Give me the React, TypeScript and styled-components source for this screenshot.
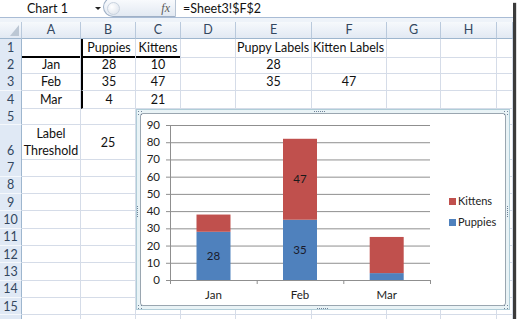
import React from "react";
import styled, { createGlobalStyle } from "styled-components";

const Global = createGlobalStyle`
  html, body { margin: 0; padding: 0; background: #fff; }
  body { font-family: Lato, "Open Sans", sans-serif; }
`;

const COLS = [22, 59, 55, 45, 55, 76, 75, 54, 56, 16];
const TEMPLATE = COLS.map((c) => `${c}px`).join(" ");
const LETTERS = ["A", "B", "C", "D", "E", "F", "G", "H", ""];

const Window = styled.div`
  position: relative;
  width: 513px;
  height: 319px;
  overflow: hidden;
  background: #fff;
  box-shadow: 3px 3px 1px rgba(25, 25, 25, 0.85);
`;

const FormulaBar = styled.div`
  display: flex;
  align-items: stretch;
  height: 17px;
  border-bottom: 1px solid #a9bcd5;
  background: #fff;
`;

const NameBox = styled.div`
  width: 92px;
  box-sizing: border-box;
  padding-left: 27px;
  display: flex;
  align-items: center;
  font-size: 12.5px;
  color: #111;
`;

const ArrowBox = styled.div`
  width: 11px;
  display: flex;
  align-items: center;
  justify-content: center;
`;

const Arrow = styled.span`
  width: 0;
  height: 0;
  border-left: 3px solid transparent;
  border-right: 3px solid transparent;
  border-top: 3px solid #222;
`;

const FxPill = styled.div`
  width: 73px;
  margin-top: -3px;
  height: 20px;
  box-sizing: border-box;
  border: 1px solid #9fb0c6;
  border-right-color: #b7c4d4;
  border-radius: 11px 0 0 11px;
  background: linear-gradient(#fbfcfe, #e2e9f2);
  display: flex;
  align-items: center;
  justify-content: space-between;
  padding: 3px 5px 0 3px;
`;

const Shine = styled.span`
  width: 11px;
  height: 11px;
  border-radius: 50%;
  background: radial-gradient(circle at 35% 35%, #ffffff, #d9e0ea);
  border: 1px solid #c9d3df;
`;

const Fx = styled.span`
  font-family: "Liberation Serif", serif;
  font-style: italic;
  font-size: 12px;
  color: #5a5a5a;
`;

const FormulaText = styled.div`
  flex: 1;
  display: flex;
  align-items: center;
  padding-left: 7px;
  font-size: 12.5px;
  color: #111;
`;

const Spacer = styled.div`
  height: 3.5px;
  background: #eef3f9;
`;

const HeaderRow = styled.div`
  display: grid;
  grid-template-columns: ${TEMPLATE};
  height: 17.2px;
`;

const ColHead = styled.div`
  box-sizing: border-box;
  display: flex;
  align-items: center;
  justify-content: center;
  font-size: 12.5px;
  color: #33475f;
  background: linear-gradient(#f6f9fc, #e2e9f3);
  border-right: 1px solid #b9c9dc;
  border-bottom: 1px solid #9eb6ce;
`;

const Corner = styled(ColHead)`
  align-items: flex-end;
  justify-content: flex-end;
  padding: 0 2px 2px 0;
`;

const CornerTri = styled.span`
  width: 0;
  height: 0;
  border-left: 9px solid transparent;
  border-bottom: 11px solid #bcc7d4;
`;

const Row = styled.div<{ $h: number }>`
  display: grid;
  grid-template-columns: ${TEMPLATE};
  height: ${(p) => p.$h}px;
`;

const RowHead = styled.div<{ $bottom?: boolean }>`
  box-sizing: border-box;
  display: flex;
  justify-content: center;
  align-items: ${(p) => (p.$bottom ? "flex-end" : "center")};
  padding-bottom: ${(p) => (p.$bottom ? "1px" : "0")};
  font-size: 12.5px;
  color: #33475f;
  background: #e0e9f5;
  border-right: 1px solid #9eb6ce;
  border-bottom: 1px solid #f5f8fc;
`;

const Cell = styled.div<{ $left?: boolean; $tl?: boolean; $tb?: boolean }>`
  box-sizing: border-box;
  display: flex;
  align-items: center;
  justify-content: ${(p) => (p.$left ? "flex-start" : "center")};
  padding-left: ${(p) => (p.$left ? "1px" : "0")};
  text-align: center;
  white-space: nowrap;
  line-height: 17px;
  font-size: 12.5px;
  color: #111;
  border-right: 1px solid #d5dce8;
  border-bottom: ${(p) => (p.$tb ? "2px solid #000" : "1px solid #d5dce8")};
  border-left: ${(p) => (p.$tl ? "2px solid #000" : "none")};
`;

const ChartFrame = styled.div`
  position: absolute;
  left: 136px;
  top: 109px;
  width: 374px;
  height: 201px;
  box-sizing: border-box;
  border: 1px solid #b0cdd8;
  background: #e9f3f6;
  padding: 3px;
`;

const ChartArea = styled.div`
  width: 100%;
  height: 100%;
  box-sizing: border-box;
  border: 1px solid #9aa6b0;
  border-radius: 3px;
  background: #fff;
  overflow: hidden;
`;

const Handle = styled.span<{ $v?: boolean }>`
  position: absolute;
  width: ${(p) => (p.$v ? "0" : "11px")};
  height: ${(p) => (p.$v ? "11px" : "0")};
  border-top: ${(p) => (p.$v ? "none" : "1px dotted #6f8298")};
  border-left: ${(p) => (p.$v ? "1px dotted #6f8298" : "none")};
`;

const CornerHandle = styled.span`
  position: absolute;
  width: 5px;
  height: 5px;
  background:
    radial-gradient(circle, #6f8298 0.8px, transparent 1px) 0 0 / 3px 3px;
`;

type CellDef = { text?: React.ReactNode; left?: boolean; tl?: boolean; tb?: boolean };
type RowDef = { n: number; label: string; h: number; cells: CellDef[]; bottomNum?: boolean };

const pad = (cells: CellDef[]): CellDef[] => {
  const out = [...cells];
  while (out.length < 9) out.push({});
  return out;
};

const RH = 17.33;
const rows: RowDef[] = [
  {
    n: 1,
    label: "1",
    h: RH,
    cells: pad([
      { tb: true },
      { text: "Puppies", tl: true, tb: true },
      { text: "Kittens", tb: true },
      {},
      { text: "Puppy Labels", left: true },
      { text: "Kitten Labels", left: true },
    ]),
  },
  { n: 2, label: "2", h: RH, cells: pad([{ text: "Jan" }, { text: "28", tl: true }, { text: "10" }, {}, { text: "28" }]) },
  {
    n: 3,
    label: "3",
    h: RH,
    cells: pad([{ text: "Feb" }, { text: "35", tl: true }, { text: "47" }, {}, { text: "35" }, { text: "47" }]),
  },
  { n: 4, label: "4", h: RH, cells: pad([{ text: "Mar" }, { text: "4", tl: true }, { text: "21" }]) },
  { n: 5, label: "5", h: RH, cells: pad([]) },
  {
    n: 6,
    label: "6",
    h: 34,
    bottomNum: true,
    cells: pad([
      {
        text: (
          <>
            Label
            <br />
            Threshold
          </>
        ),
      },
      { text: "25" },
    ]),
  },
  ...[7, 8, 9, 10, 11, 12, 13, 14, 15].map((n) => ({ n, label: String(n), h: RH, cells: pad([]) })),
  { n: 16, label: "", h: RH, cells: pad([]) },
];

const Y0 = 280;
const YS = 155 / 90;
const yOf = (v: number) => Y0 - v * YS;
const BAR_W = 34;
const THRESHOLD = 25;
const RED = "#c0504d";
const BLUE = "#4f81bd";
const cats = [
  { name: "Jan", p: 28, k: 10, cx: 213.5 },
  { name: "Feb", p: 35, k: 47, cx: 300 },
  { name: "Mar", p: 4, k: 21, cx: 386.7 },
];

const Chart: React.FC = () => {
  const ticks = [0, 10, 20, 30, 40, 50, 60, 70, 80, 90];
  const font = "Lato, 'Open Sans', sans-serif";
  return (
    <svg width={364} height={191} viewBox="141 114 364 191" style={{ display: "block" }}>
      {ticks.map((t) => (
        <g key={t}>
          <line x1={166} x2={430} y1={yOf(t) + 0.5} y2={yOf(t) + 0.5} stroke="#8f8f8f" strokeWidth={1} />
          <text x={160} y={yOf(t) + 4} textAnchor="end" fontSize={11.5} fontFamily={font} fill="#222">
            {t}
          </text>
        </g>
      ))}
      <line x1={170.5} x2={170.5} y1={yOf(90)} y2={Y0 + 4} stroke="#8f8f8f" />
      {[256.7, 343.3, 430].map((x) => (
        <line key={x} x1={x + 0.5} x2={x + 0.5} y1={Y0} y2={Y0 + 4} stroke="#8f8f8f" />
      ))}
      {cats.map((c) => {
        const x = c.cx - BAR_W / 2;
        const yp = yOf(c.p);
        const yk = yOf(c.p + c.k);
        return (
          <g key={c.name}>
            <rect x={x} y={yp} width={BAR_W} height={Y0 - yp} fill={BLUE} />
            <rect x={x} y={yk} width={BAR_W} height={yp - yk} fill={RED} />
            {c.p > THRESHOLD && (
              <text x={c.cx} y={(yp + Y0) / 2 + 4} textAnchor="middle" fontSize={11.5} fontFamily={font} fill="#1a1a2a">
                {c.p}
              </text>
            )}
            {c.k > THRESHOLD && (
              <text x={c.cx} y={(yk + yp) / 2 + 4} textAnchor="middle" fontSize={11.5} fontFamily={font} fill="#1a1a1a">
                {c.k}
              </text>
            )}
            <text x={c.cx} y={299} textAnchor="middle" fontSize={11.5} fontFamily={font} fill="#222">
              {c.name}
            </text>
          </g>
        );
      })}
      <rect x={449} y={198} width={7} height={7} fill={RED} />
      <text x={458} y={205} fontSize={11} fontFamily={font} fill="#222">
        Kittens
      </text>
      <rect x={449} y={219} width={7} height={7} fill={BLUE} />
      <text x={458} y={226} fontSize={11} fontFamily={font} fill="#222">
        Puppies
      </text>
    </svg>
  );
};

export default function App() {
  return (
    <>
      <Global />
      <Window>
        <FormulaBar>
          <NameBox>Chart 1</NameBox>
          <ArrowBox>
            <Arrow />
          </ArrowBox>
          <FxPill>
            <Shine />
            <Fx>fx</Fx>
          </FxPill>
          <FormulaText>=Sheet3!$F$2</FormulaText>
        </FormulaBar>
        <Spacer />
        <HeaderRow>
          <Corner>
            <CornerTri />
          </Corner>
          {LETTERS.map((l, i) => (
            <ColHead key={i}>{l}</ColHead>
          ))}
        </HeaderRow>
        {rows.map((r) => (
          <Row key={r.n} $h={r.h}>
            <RowHead $bottom={r.bottomNum}>{r.label}</RowHead>
            {r.cells.map((c, i) => (
              <Cell key={i} $left={c.left} $tl={c.tl} $tb={c.tb}>
                {c.text}
              </Cell>
            ))}
          </Row>
        ))}
        <ChartFrame>
          <ChartArea>
            <Chart />
          </ChartArea>
          <CornerHandle style={{ left: 0, top: 0 }} />
          <CornerHandle style={{ right: 1, top: 0 }} />
          <CornerHandle style={{ left: 0, bottom: 0 }} />
          <CornerHandle style={{ right: 1, bottom: 0 }} />
          <Handle style={{ left: 177, top: 1 }} />
          <Handle style={{ left: 180, bottom: 0 }} />
          <Handle $v style={{ left: 0, top: 96 }} />
          <Handle $v style={{ right: 1, top: 96 }} />
        </ChartFrame>
      </Window>
    </>
  );
}
